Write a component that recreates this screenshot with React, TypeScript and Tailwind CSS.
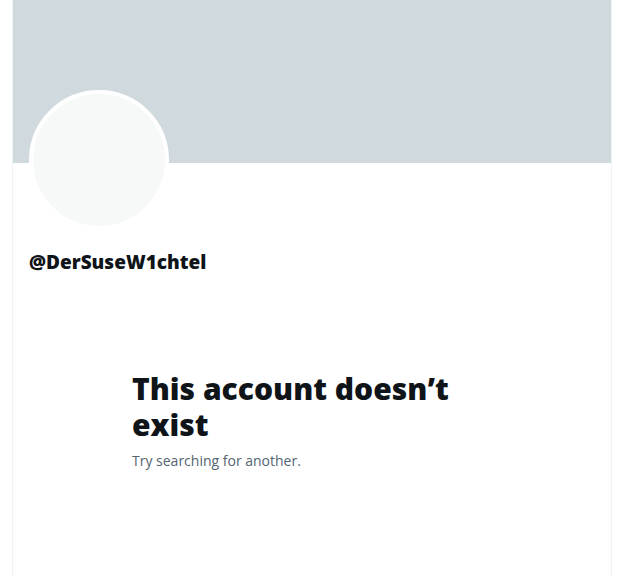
export default function App() {
  return (
    <div className="min-h-[576px] bg-white" style={{ fontFamily: '"Open Sans", "Noto Sans", sans-serif' }}>
      <div className="ml-3 min-h-[576px] w-[600px] border-x border-[#eff3f4]">
        <div className="h-[163px] bg-[#cfd9de]" />
        <div className="px-4">
          <div className="-mt-[73px] h-[140px] w-[140px] rounded-full border-4 border-white bg-[#f7f9f9]" />
          <div className="mt-5 text-[19px] font-extrabold leading-6 text-[#0f1419]">@DerSuseW1chtel</div>
        </div>
        <div className="mx-auto mt-[97px] w-[360px]">
          <h1 className="text-[30px] font-extrabold leading-9 text-[#0f1419]">This account doesn’t exist</h1>
          <p className="mt-2 text-[14px] leading-5 text-[#536471]">Try searching for another.</p>
        </div>
      </div>
    </div>
  );
}
